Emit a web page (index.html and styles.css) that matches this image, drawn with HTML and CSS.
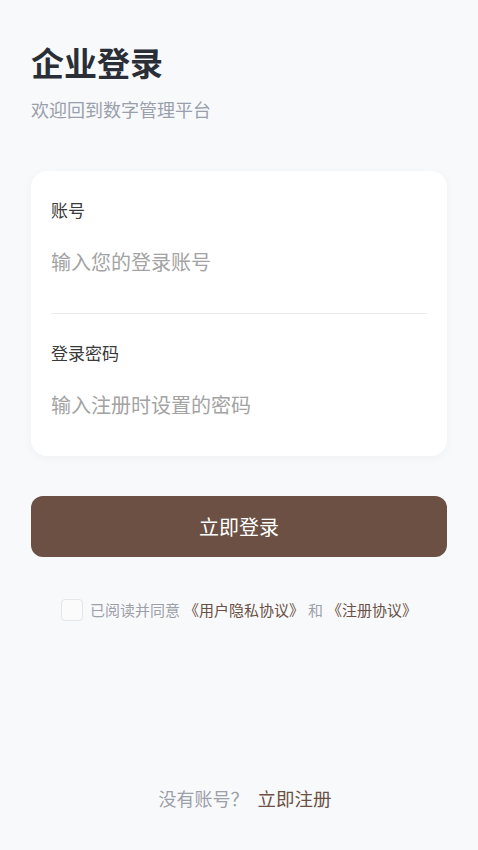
FILE: index.html
```html
<!DOCTYPE html>
<html lang="zh-CN">
<head>
<meta charset="utf-8">
<meta name="viewport" content="width=device-width, initial-scale=1">
<title>企业登录</title>
<link rel="stylesheet" href="styles.css">
</head>
<body>
<div class="page">
  <header class="head">
    <h1 class="title">企业登录</h1>
    <p class="subtitle">欢迎回到数字管理平台</p>
  </header>

  <form class="card">
    <div class="field">
      <label class="label">账号</label>
      <input class="input" type="text" placeholder="输入您的登录账号">
    </div>
    <div class="divider"></div>
    <div class="field">
      <label class="label">登录密码</label>
      <input class="input" type="password" placeholder="输入注册时设置的密码">
    </div>
  </form>

  <button class="submit" type="button">立即登录</button>

  <div class="agree">
    <span class="check"></span>
    <span class="agree-text">已阅读并同意</span>
    <a class="link doc">《用户隐私协议》</a>
    <span class="agree-text">和</span>
    <a class="link doc">《注册协议》</a>
  </div>

  <footer class="foot">
    <span class="foot-text">没有账号？</span>
    <a class="link reg">立即注册</a>
  </footer>
</div>
</body>
</html>
```

FILE: styles.css
```css
* { box-sizing: border-box; }

html, body {
  margin: 0;
  padding: 0;
  background: #f8f9fb;
  font-family: "Noto Sans CJK SC", "Noto Sans", sans-serif;
}

.page {
  min-height: 850px;
  display: flex;
  flex-direction: column;
  padding: 42px 31px 39px;
}

.title {
  margin: 0;
  font-size: 33px;
  line-height: 40px;
  font-weight: 700;
  color: #2a2e36;
}

.subtitle {
  margin: 14px 0 0;
  font-size: 18px;
  line-height: 26px;
  color: #99a0ab;
}

.card {
  margin: 49px 0 0;
  background: #ffffff;
  border-radius: 16px;
  padding: 0 20px;
  box-shadow: 0 2px 10px rgba(30, 40, 60, 0.04);
}

.field {
  display: flex;
  flex-direction: column;
  padding: 27px 0 37px;
}

.label {
  font-size: 17px;
  line-height: 24px;
  color: #3a3a3a;
}

.input {
  margin-top: 26px;
  border: 0;
  outline: 0;
  padding: 0;
  background: transparent;
  font-family: inherit;
  font-size: 20px;
  line-height: 28px;
  height: 28px;
  color: #333;
}

.input::placeholder {
  color: #a3a3a3;
}

.divider {
  height: 1px;
  background: #ebebee;
}

.submit {
  margin-top: 40px;
  height: 61px;
  width: 100%;
  border: 0;
  border-radius: 12px;
  background: #6b5043;
  color: #ffffff;
  font-family: inherit;
  font-size: 20px;
}

.agree {
  margin-top: 42px;
  display: flex;
  align-items: center;
  justify-content: center;
  font-size: 15px;
  line-height: 22px;
  padding-left: 4px;
}

.check {
  width: 22px;
  height: 22px;
  border: 1px solid #e4e6ea;
  border-radius: 4px;
  background: #fbfbfc;
  margin-right: 7px;
}

.agree-text {
  color: #9ca0a8;
}

.link {
  color: #6b5043;
  text-decoration: none;
}

.doc {
  margin: 0 4px;
}

.foot {
  margin-top: auto;
  display: flex;
  justify-content: center;
  font-size: 18px;
  line-height: 26px;
  padding-left: 12px;
}

.foot-text {
  color: #9ca0a8;
  margin-right: 9px;
}

.reg {
  font-size: 18.5px;
}
```
